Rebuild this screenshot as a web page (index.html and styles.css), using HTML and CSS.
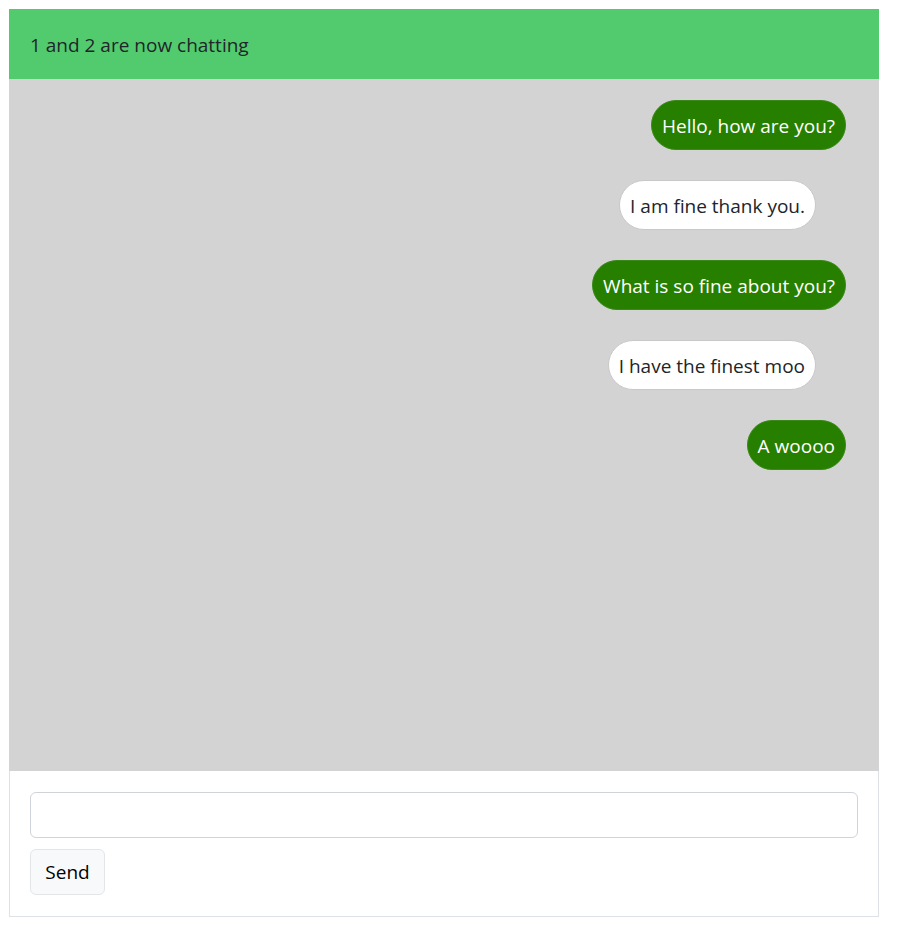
FILE: index.html
```html
<!DOCTYPE html>
<html>
<head>
<meta charset="utf-8">
<link rel="stylesheet" href="styles.css">
</head>
<body>
<div class="card">
  <div class="card-header">1 and 2 are now chatting</div>
  <div class="messages">
    <div class="bubble sent">Hello, how are you?</div>
    <div class="bubble received">I am fine thank you.</div>
    <div class="bubble sent">What is so fine about you?</div>
    <div class="bubble received">I have the finest moo</div>
    <div class="bubble sent">A woooo</div>
  </div>
  <div class="card-footer">
    <input class="text-input" type="text">
    <button class="send-btn">Send</button>
  </div>
</div>
</body>
</html>
```
FILE: styles.css
```css
* { box-sizing: border-box; }
body {
  margin: 9px 18px 9px 9px;
  font-family: "Open Sans", "Noto Sans", sans-serif;
  color: #212529;
  background: #fff;
}
.card {
  width: 870px;
  border: 1px solid #dee2e6;
  display: flex;
  flex-direction: column;
}
.card-header {
  background: #52cb6f;
  height: 70px;
  margin: -1px -1px 0 -1px;
  padding: 1px 20px 0 21px;
  display: flex;
  align-items: center;
  font-size: 19px;
}
.messages {
  background: #d3d3d3;
  height: 692px;
  margin: 0 -1px;
  padding: 21px 33px 0 0;
  display: flex;
  flex-direction: column;
  align-items: flex-end;
  gap: 30px;
}
.bubble {
  height: 50px;
  border-radius: 25px;
  padding: 1px 10px 0;
  font-size: 19px;
  display: flex;
  align-items: center;
  border: 1px solid transparent;
}
.sent {
  background: #277f00;
  color: #fff;
  border-color: #3a8a1a;
}
.received {
  background: #fff;
  color: #212529;
  border-color: #c8c8c8;
  margin-right: 30px;
}
.card-footer {
  padding: 21px 20px 21px 20px;
  display: flex;
  flex-direction: column;
  align-items: flex-start;
  gap: 11px;
}
.text-input {
  width: 100%;
  height: 46px;
  border: 1px solid #ced4da;
  border-radius: 6px;
  font-family: inherit;
  font-size: 19px;
}
.send-btn {
  height: 46px;
  width: 75px;
  background: #f8f9fa;
  border: 1px solid #e3e6e9;
  border-radius: 6px;
  font-family: inherit;
  font-size: 19px;
  color: #000;
  padding: 0;
}
```
